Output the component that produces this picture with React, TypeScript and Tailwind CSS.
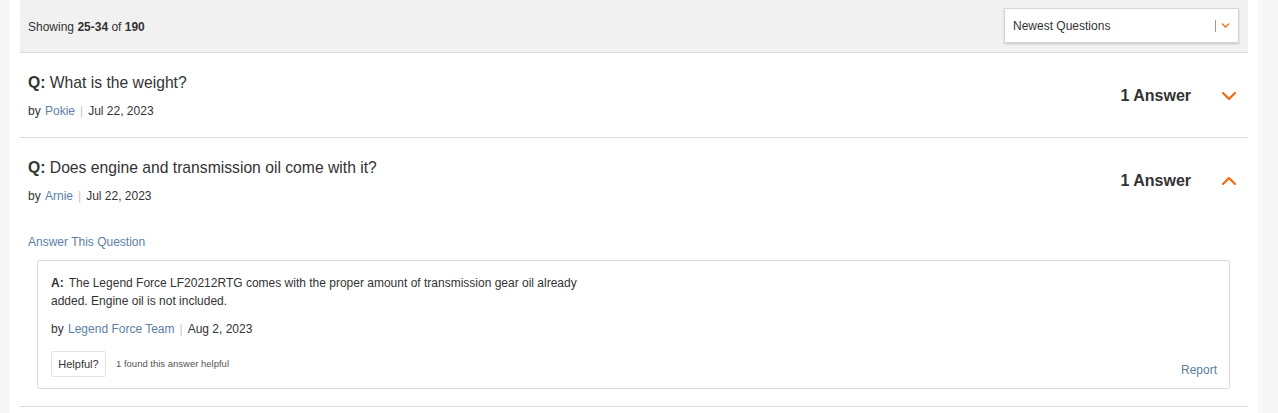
import { ChevronDown, ChevronUp } from 'lucide-react';

const font = { fontFamily: '"Liberation Sans", Arial, sans-serif' };

function Byline({ name, date }: { name: string; date: string }) {
  return (
    <p className="text-[12px] leading-[16px] text-[#333]">
      by <span className="ml-[1px] text-[#5b7fa3]">{name}</span>
      <span className="mx-[5px] text-[#c8c8c8]">|</span>
      {date}
    </p>
  );
}

function QuestionHead({ title, name, date, open }: { title: string; name: string; date: string; open: boolean }) {
  return (
    <div className="flex items-center justify-between pb-[18px] pl-[8px] pr-[7px] pt-[20px]">
      <div className="flex flex-col gap-[10px]">
        <h3 className="text-[15.7px] leading-[20px] text-[#333]">
          <b>Q:</b> {title}
        </h3>
        <Byline name={name} date={date} />
      </div>
      <div className="flex items-center gap-[26px]">
        <span className="text-[16px] font-bold text-[#333]">1 Answer</span>
        {open ? (
          <ChevronUp size={24} strokeWidth={2} color="#f96302" />
        ) : (
          <ChevronDown size={24} strokeWidth={2} color="#f96302" />
        )}
      </div>
    </div>
  );
}

export default function App() {
  return (
    <div className="min-h-screen bg-[#f7f7f7]" style={font}>
      <div className="ml-[10px] w-[1248px] bg-white px-[10px] pb-[6px]">
        {/* Barre de tri */}
        <div className="flex h-[53px] items-center justify-between border-b border-[#dcdcdc] bg-[#f1f1f1] pl-[8px] pr-[9px]">
          <p className="mt-[1px] text-[12px] text-[#333]">
            Showing <b>25-34</b> of <b>190</b>
          </p>
          <div className="mb-[1px] flex h-[35px] w-[235px] items-center justify-between border border-[#d6d6d6] bg-white pl-[8px] pr-[6px] shadow-[0_1px_2px_rgba(0,0,0,0.18)]">
            <span className="text-[12px] text-[#333]">Newest Questions</span>
            <div className="flex items-center gap-[3px]">
              <span className="h-[12px] w-px bg-[#999]" />
              <ChevronDown size={13} strokeWidth={2.5} color="#f96302" />
            </div>
          </div>
        </div>

        {/* Question 1 */}
        <div className="border-b border-[#dcdcdc]">
          <QuestionHead title="What is the weight?" name="Pokie" date="Jul 22, 2023" open={false} />
        </div>

        {/* Question 2, dépliée */}
        <div className="border-b border-[#dcdcdc] pb-[17px]">
          <QuestionHead
            title="Does engine and transmission oil come with it?"
            name="Arnie"
            date="Jul 22, 2023"
            open
          />
          <p className="mt-[12px] pl-[8px] text-[12px] leading-[16px] text-[#5b7fa3]">Answer This Question</p>
          <div className="ml-[17px] mr-[18px] mt-[10px] rounded-[2px] border border-[#dcdcdc] pb-[11px] pl-[13px] pr-[12px] pt-[13px]">
            <p className="max-w-[540px] text-[12px] leading-[18px] text-[#333]">
              <b className="mr-[5px]">A:</b>The Legend Force LF20212RTG comes with the proper amount of transmission gear oil
              already added. Engine oil is not included.
            </p>
            <div className="mt-[11px]">
              <Byline name="Legend Force Team" date="Aug 2, 2023" />
            </div>
            <div className="mt-[14px] flex items-end justify-between">
              <div className="flex items-center gap-[10px]">
                <span className="flex h-[26px] w-[55px] items-center justify-center rounded-[2px] border border-[#e2e2e2] text-[11px] text-[#333]">
                  Helpful?
                </span>
                <span className="text-[9.5px] text-[#555]">1 found this answer helpful</span>
              </div>
              <span className="mb-[-2px] text-[12px] text-[#5b7fa3]">Report</span>
            </div>
          </div>
        </div>
      </div>
    </div>
  );
}
